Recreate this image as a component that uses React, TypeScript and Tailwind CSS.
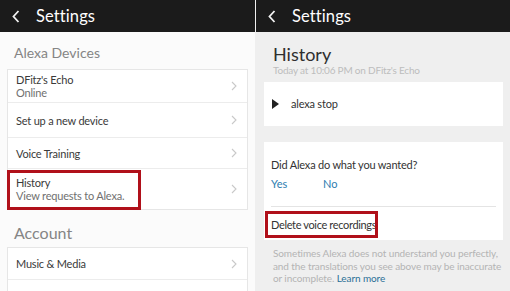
const font = { fontFamily: 'Lato, "Open Sans", sans-serif' }

function Header() {
  return (
    <div className="flex h-8 items-center bg-[#1b1b1b] text-white">
      <svg width="8" height="13" viewBox="0 0 8 13" className="ml-3">
        <path d="M6.5 1 L1.5 6.5 L6.5 12" fill="none" stroke="#f2f2f2" strokeWidth="1.8" />
      </svg>
      <span className="ml-4 text-[16.5px] leading-none tracking-[0.1px]">Settings</span>
    </div>
  )
}

function Chevron() {
  return (
    <svg width="6" height="10" viewBox="0 0 6 10" className="mr-[10px]">
      <path d="M1 1 L5 5 L1 9" fill="none" stroke="#c9c9c9" strokeWidth="1.1" />
    </svg>
  )
}

function Row({ title, sub, h, last, boxed }: { title: string; sub?: string; h: string; last?: boolean; boxed?: boolean }) {
  return (
    <div className={`relative flex items-center justify-between pl-[8px] ${h} ${last ? '' : 'border-b border-[#ececec]'}`}>
      <div className="text-[11px] leading-[13px] tracking-[-0.2px]">
        <div className="text-[#3a3a3a]">{title}</div>
        {sub && <div className="text-[#707070]">{sub}</div>}
      </div>
      <Chevron />
      {boxed && <div className="absolute left-[-1px] top-[1px] h-[40px] w-[134px] border-[3px] border-[#b0101a]" />}
    </div>
  )
}

export default function App() {
  return (
    <div className="flex h-[291px] w-[510px] overflow-hidden bg-[#efefef]" style={font}>
      <div className="w-[255px] shrink-0 bg-[#fbfbfb]">
        <Header />
        <div className="px-[7px]">
          <div className="pl-[7px] pt-[11px] text-[14px] leading-[20px] text-[#858585]">Alexa Devices</div>
          <div className="mt-[6px] border border-[#e6e6e6] bg-white">
            <Row title="DFitz's Echo" sub="Online" h="h-[33px]" />
            <Row title="Set up a new device" h="h-[35px]" />
            <Row title="Voice Training" h="h-[31px]" />
            <Row title="History" sub="View requests to Alexa." h="h-[40px]" last boxed />
          </div>
          <div className="pl-[7px] pt-[13px] text-[16px] leading-[20px] text-[#858585]">Account</div>
          <div className="mt-[4px] border border-[#e6e6e6] bg-white">
            <Row title="Music & Media" h="h-[32px]" />
            <Row title="" h="h-[33px]" last />
          </div>
        </div>
      </div>
      <div className="ml-px w-[254px] shrink-0">
        <Header />
        <div className="pl-[8px] pr-[7px]">
          <div className="pl-[9px] pt-[11px] text-[18px] leading-[22px] text-[#2e2e2e]">History</div>
          <div className="pl-[9px] text-[10px] leading-[11px] tracking-[-0.2px] text-[#bdbdbd]">Today at 10:06 PM on DFitz's Echo</div>
          <div className="mt-[6px] flex h-[44px] items-center bg-white">
            <svg width="7" height="10" viewBox="0 0 7 10" className="ml-[8px]">
              <path d="M0 0 L7 5 L0 10 Z" fill="#222" />
            </svg>
            <span className="ml-[12px] text-[11px] tracking-[-0.2px] text-[#333]">alexa stop</span>
          </div>
          <div className="mt-[16px] bg-white px-[7px] pb-[2px]">
            <div className="pt-[16px] text-[11px] leading-[13px] tracking-[-0.2px] text-[#333]">Did Alexa do what you wanted?</div>
            <div className="mt-[6px] flex text-[11px] leading-[13px] text-[#2d7db0]">
              <span className="w-[52px]">Yes</span>
              <span>No</span>
            </div>
            <div className="mt-[16px] border-b border-[#e4e4e4]" />
            <div className="relative flex h-[31px] items-center pt-[5px] text-[11px] tracking-[-0.35px] text-[#333]">
              Delete voice recordings
              <div className="absolute left-[-6px] top-[4px] h-[27px] w-[113px] border-[3px] border-[#b0101a]" />
            </div>
          </div>
          <div className="whitespace-nowrap pl-[9px] pt-[7px] text-[10px] leading-[12.5px] tracking-[-0.1px] text-[#b4b4b4]">
            Sometimes Alexa does not understand you perfectly,<br />
            and the translations you see above may be inaccurate<br />
            or incomplete. <span className="text-[#2a6f96]">Learn more</span>
          </div>
        </div>
      </div>
    </div>
  )
}
